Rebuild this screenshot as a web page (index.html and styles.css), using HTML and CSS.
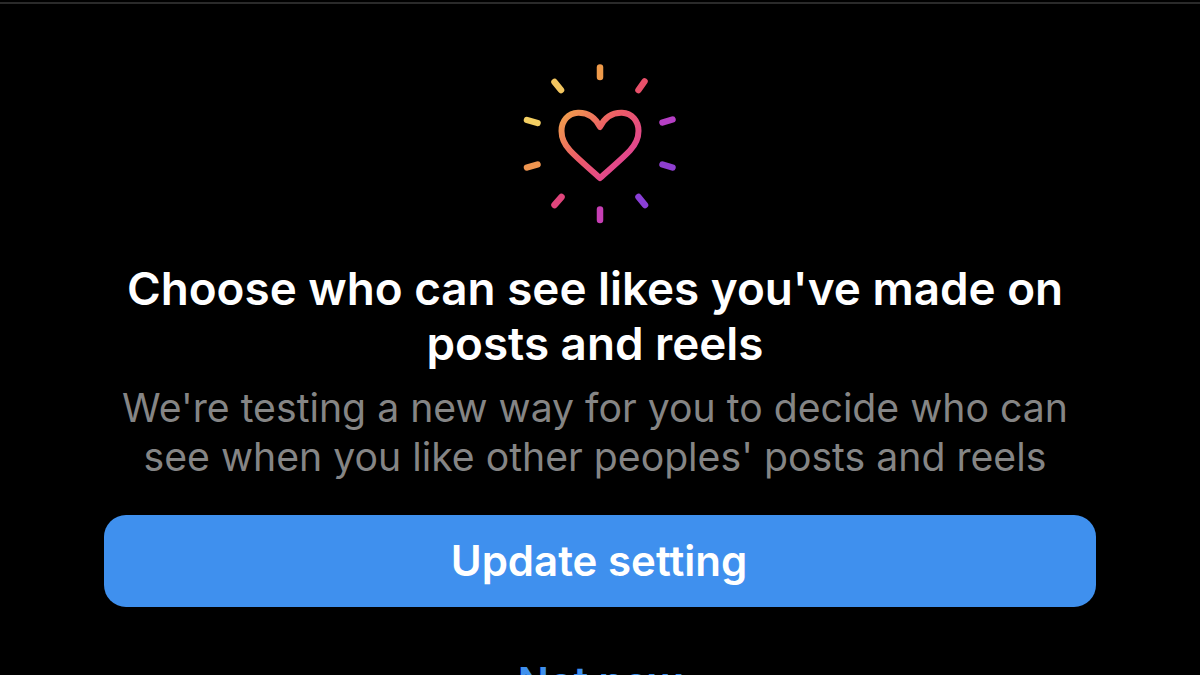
FILE: index.html
```html
<!DOCTYPE html>
<html lang="en">
<head>
    <meta charset="UTF-8">
    <meta name="viewport" content="width=device-width, initial-scale=1.0">
    <title>Choose who can see likes</title>
    <link rel="stylesheet" href="styles.css">
</head>
<body>
    <div class="top-line"></div>
    <div class="container">
        <svg class="heart-icon" width="160" height="166" viewBox="520 60 160 166" fill="none" stroke-linecap="round" stroke-linejoin="round">
            <defs>
                <linearGradient id="heart-grad" gradientUnits="userSpaceOnUse" x1="565" y1="115" x2="630" y2="175">
                    <stop offset="0" stop-color="#f09a4e"/>
                    <stop offset="0.45" stop-color="#ec5a68"/>
                    <stop offset="1" stop-color="#dd3f9c"/>
                </linearGradient>
            </defs>
            <path class="heart" stroke="url(#heart-grad)" d="M600 127 C595 117 587 112.500 578 112.800 C568 113.300 561.500 121 561.500 131 C561.500 138 564 144 570 150.500 C578 159 590 169 600 178 C610 169 622 159 630 150.500 C636 144 638.500 138 638.500 131 C638.500 121 632 113.300 622 112.800 C613 112.500 605 117 600 127 Z"/>
            <g class="rays">
                <path stroke="#ef9a4a" d="M600 67.500 V77"/>
                <path stroke="#e8506a" d="M644.500 81.500 L638.500 90"/>
                <path stroke="#b53fc4" d="M672.500 119.500 L662.500 122.500"/>
                <path stroke="#8f3fd0" d="M662.500 164.500 L672.500 167.500"/>
                <path stroke="#8a3fd6" d="M638.500 197 L645 205"/>
                <path stroke="#c63fb4" d="M600 209.500 V220"/>
                <path stroke="#e0457c" d="M561.500 197 L554.500 205"/>
                <path stroke="#ef9550" d="M537.500 164.500 L527 167.500"/>
                <path stroke="#f4cf62" d="M527 120 L537.500 123"/>
                <path stroke="#f2c560" d="M554.500 82 L561 90"/>
            </g>
        </svg>
        <h1>Choose who can see likes you've made on posts and reels</h1>
        <p class="subtitle">We're testing a new way for you to decide who can see when you like other peoples' posts and reels</p>
        <button class="btn update-btn">Update setting</button>
        <a href="#" class="not-now">Not now</a>
    </div>
</body>
</html>
```

FILE: styles.css
```css
html, body {
    height: 100%;
}
body {
    margin: 0;
    background-color: #000;
    font-family: Inter, "Liberation Sans", sans-serif;
    overflow: hidden;
}
.top-line {
    height: 2px;
    margin-top: 2px;
    background-color: #2a2a2a;
}
.container {
    box-sizing: border-box;
    display: flex;
    flex-direction: column;
    align-items: center;
    height: 671px;
    padding: 56px 104px 0;
    text-align: center;
    overflow: hidden;
}
.heart-icon {
    display: block;
    flex: none;
}
.heart {
    stroke-width: 6;
}
.rays path {
    stroke-width: 6.500;
}
h1 {
    flex: none;
    margin: 35px 10px 0 0;
    color: #fff;
    font-size: 45.800px;
    font-weight: 600;
    line-height: 55px;
}
.subtitle {
    flex: none;
    margin: 12px 10px 0 0;
    color: #858585;
    font-size: 39.200px;
    line-height: 49px;
    font-weight: 400;
}
.btn {
    display: block;
    flex: none;
    width: 100%;
    height: 92px;
    margin-top: 34px;
    padding: 0 2px 2px 0;
    border: none;
    border-radius: 22px;
    background-color: #3f90ee;
    color: #fff;
    font-family: inherit;
    font-size: 42px;
    font-weight: 600;
    cursor: pointer;
}
.not-now {
    display: block;
    flex: none;
    margin-top: 53px;
    color: #3f90ee;
    font-size: 41px;
    font-weight: 600;
    line-height: 45px;
    text-decoration: none;
}
```
